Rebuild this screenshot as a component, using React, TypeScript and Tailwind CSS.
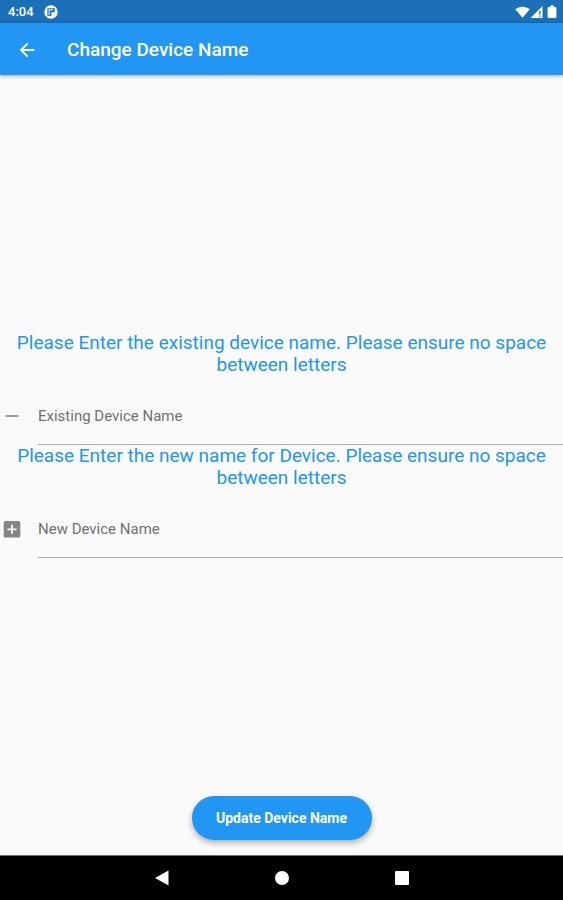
import { useState } from 'react';
import type { FormEvent, ReactNode } from 'react';

interface NameFieldProps {
  id: string;
  label: string;
  prompt: string;
  icon: ReactNode;
  value: string;
  onChange: (value: string) => void;
}

function StatusBar() {
  return (
    <div className="flex h-[23px] items-center justify-between bg-[#1b70b8] pr-1.5 pl-2 text-white">
      <div className="flex items-center gap-2.5">
        <span className="text-[13px] leading-4 font-medium">4:04</span>
        <svg className="size-3.5" viewBox="0 0 14 14" aria-hidden="true">
          <circle cx="7" cy="7" r="6.7" fill="currentColor" />
          <path d="M3.400 3.200H10.800V7.200H7.400V11H3.400z" fill="#1b70b8" />
          <path d="M4.600 4.200H9V5.200H5.600V10.200H4.600z" fill="currentColor" />
        </svg>
      </div>
      <div className="flex items-center">
        <svg className="h-3.5 w-[15px]" viewBox="0 0 15 14" aria-hidden="true">
          <path d="M.3 4.300C4.400.8 10.600.8 14.700 4.300L7.500 12.800z" fill="currentColor" />
        </svg>
        <svg className="h-3.5 w-[13px]" viewBox="0 0 13 14" aria-hidden="true">
          <path d="M.5 13L12.500 1V13z" fill="currentColor" />
          <path d="M9.800 6V9.500M9.800 10.500V11.800" stroke="#1b70b8" strokeWidth="1.4" fill="none" />
        </svg>
        <svg className="ml-1 h-3.5 w-[10px]" viewBox="0 0 10 14" aria-hidden="true">
          <path d="M3 .5h4v1.500h1.200q1.200 0 1.200 1.200v8.600q0 1.200-1.200 1.200H1.800Q.6 13 .6 11.800V3.200Q.6 2 1.800 2H3z" fill="currentColor" />
        </svg>
      </div>
    </div>
  );
}

function AppBar() {
  return (
    <header className="z-10 flex h-[52px] items-center bg-[#2196f3] pt-px pl-[17px] text-white shadow-[0_1px_4px_rgba(0,0,0,0.35)]">
      <button type="button" aria-label="Back" className="mr-[30px] flex size-5 items-center justify-center">
        <svg className="size-5" viewBox="1 1 22 22" aria-hidden="true">
          <path d="M20 11H7.830l5.590-5.590L12 4l-8 8 8 8 1.410-1.410L7.830 13H20v-2z" fill="currentColor" />
        </svg>
      </button>
      <h1 className="text-[19px] leading-6 font-medium">Change Device Name</h1>
    </header>
  );
}

function NameField({ id, label, prompt, icon, value, onChange }: NameFieldProps) {
  return (
    <div>
      <p className="px-4 text-center text-[19px] leading-[22px] text-[#2196f3]">{prompt}</p>
      <div className="flex items-center">
        <label htmlFor={id} aria-label={label} className="flex w-[38px] shrink-0 items-center pt-3 text-[#858585]">
          {icon}
        </label>
        <input
          id={id}
          type="text"
          placeholder={label}
          value={value}
          onChange={(e) => onChange(e.target.value)}
          className="h-[69px] min-w-0 flex-1 border-b border-[#b0b0b0] bg-transparent pt-5 pb-2 text-[15px] text-[#212121] outline-none placeholder:text-[#707070]"
        />
      </div>
    </div>
  );
}

function NavigationBar() {
  return (
    <nav className="flex h-[45px] items-center justify-center gap-[99px] border-t border-[#707070] bg-black text-white">
      <button type="button" aria-label="Back" className="flex w-[21px] justify-center">
        <svg className="size-4" viewBox="0 0 16 16" aria-hidden="true">
          <path d="M1 8L14.500.5V15.500z" fill="currentColor" />
        </svg>
      </button>
      <button type="button" aria-label="Home" className="flex w-[21px] justify-center">
        <span className="size-3.5 rounded-full bg-white" />
      </button>
      <button type="button" aria-label="Recent apps" className="flex w-[21px] justify-center">
        <span className="size-3.5 rounded-[1px] bg-white" />
      </button>
    </nav>
  );
}

export default function App() {
  const [existingName, setExistingName] = useState('');
  const [newName, setNewName] = useState('');

  const handleSubmit = (e: FormEvent) => {
    e.preventDefault();
    setExistingName(newName);
    setNewName('');
  };

  return (
    <div className="flex min-h-screen flex-col bg-[#fafafa] font-[Roboto,sans-serif]">
      <StatusBar />
      <AppBar />
      <form onSubmit={handleSubmit} className="flex flex-1 flex-col">
        <div className="flex flex-1 flex-col justify-center pt-[18px]">
          <NameField
            id="existing-name"
            label="Existing Device Name"
            prompt="Please Enter the existing device name. Please ensure no space between letters"
            value={existingName}
            onChange={setExistingName}
            icon={
              <svg className="size-6" viewBox="0 0 24 24" aria-hidden="true">
                <path d="M5.500 11.200h13v1.600h-13z" fill="currentColor" />
              </svg>
            }
          />
          <NameField
            id="new-name"
            label="New Device Name"
            prompt="Please Enter the new name for Device. Please ensure no space between letters"
            value={newName}
            onChange={setNewName}
            icon={
              <svg className="size-6" viewBox="0 0 24 24" aria-hidden="true">
                <path d="M18.500 4h-13A1.800 1.800 0 0 0 3.700 5.800v13c0 1 .8 1.800 1.800 1.800h13c1 0 1.800-.8 1.800-1.800v-13A1.800 1.800 0 0 0 18.500 4zM16.500 13.200h-3.600v3.600h-1.800v-3.600H7.500v-1.800h3.600V7.800h1.800v3.600h3.600z" fill="currentColor" />
              </svg>
            }
          />
        </div>
        <div className="flex justify-center pb-[15px]">
          <button
            type="submit"
            className="h-11 min-w-[180px] rounded-full bg-[#2196f3] px-5 text-[14px] font-bold text-white shadow-[0_3px_6px_rgba(0,0,0,0.3)]"
          >
            Update Device Name
          </button>
        </div>
      </form>
      <NavigationBar />
    </div>
  );
}
